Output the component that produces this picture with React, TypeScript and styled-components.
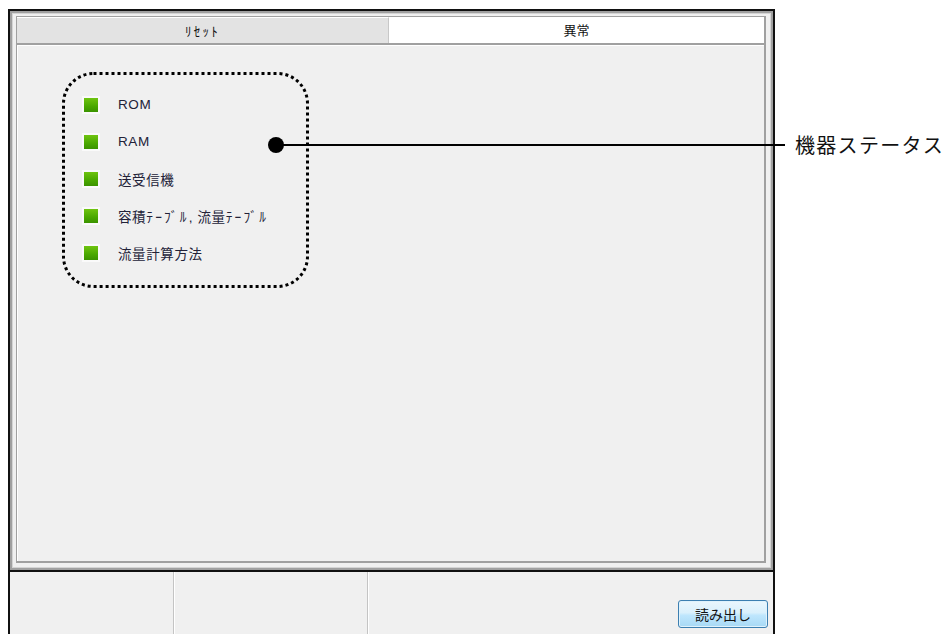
import styled, { createGlobalStyle } from "styled-components";
import { ReactNode } from "react";

const GlobalStyle = createGlobalStyle`
	html, body {
		margin: 0;
		padding: 0;
		background: #fff;
		overflow: hidden;
	}
	* {
		box-sizing: border-box;
	}
`;

const UI_FONT = `"Liberation Sans", "Noto Sans CJK JP", sans-serif`;

const Page = styled.div`
	position: relative;
	width: 948px;
	height: 634px;
	padding: 9px 0 0 8px;
	display: flex;
	align-items: flex-start;
	font-family: ${UI_FONT};
	overflow: hidden;
`;

const Window = styled.div`
	width: 767px;
	height: 640px;
	flex-shrink: 0;
	display: flex;
	flex-direction: column;
	background: #f0f0f0;
	border-left: 2px solid #111;
	border-top: 2px solid #111;
	border-right: 2px solid #111;
`;

const Frame = styled.div`
	height: 561px;
	padding: 5px 7px 7px 6px;
	display: flex;
	flex-direction: column;
	border-bottom: 2px solid #111;
	box-shadow: inset 0 0 0 2px #a0a0a0, inset 0 0 0 3px #d4d4d4;
`;

const TabRow = styled.div`
	height: 27px;
	display: flex;
	flex-shrink: 0;
	border-top: 1px solid #a0a0a0;
	border-left: 1px solid #a0a0a0;
	border-right: 2px solid #a0a0a0;
`;

const Tab = styled.div<{ active?: boolean }>`
	width: ${({ active }) => (active ? "auto" : "372px")};
	flex: ${({ active }) => (active ? 1 : "none")};
	display: flex;
	align-items: center;
	justify-content: center;
	padding-bottom: ${({ active }) => (active ? "3px" : "0")};
	font: 13px ${UI_FONT};
	color: #111;
	background: ${({ active }) => (active ? "#fff" : "#e3e3e3")};
	border-top: 1px solid #fff;
	border-right: ${({ active }) => (active ? "none" : "1px solid #c8c8c8")};
`;

// half-width katakana are drawn wider in the original UI font
const Kana = styled.span`
	letter-spacing: 2.2px;
`;

const Panel = styled.div`
	flex: 1;
	background: #f0f0f0;
	border-top: 2px solid #a0a0a0;
	border-left: 1px solid #a0a0a0;
	border-right: 2px solid #a0a0a0;
	border-bottom: 2px solid #a0a0a0;
	box-shadow: inset 1px 1px 0 #fff;
	padding: 41px 0 0 65px;
`;

const StatusList = styled.ul`
	list-style: none;
	margin: 0;
	padding: 0;
	display: flex;
	flex-direction: column;
`;

const StatusRow = styled.li`
	height: 37px;
	display: flex;
	align-items: center;
	gap: 18px;
`;

const Indicator = styled.span`
	width: 18px;
	height: 18px;
	border: 2px solid #fafafa;
	background: linear-gradient(180deg, #6fc410 0%, #4aa800 60%, #3b9300 100%);
	flex-shrink: 0;
`;

const StatusLabel = styled.span`
	font: 13.5px ${UI_FONT};
	letter-spacing: 0.6px;
	color: #222238;
`;

const StatusBar = styled.div`
	flex: 1;
	display: flex;
`;

const StatusCell = styled.div<{ w?: number }>`
	width: ${({ w }) => (w ? `${w}px` : "auto")};
	flex: ${({ w }) => (w ? "none" : 1)};
	display: flex;
	align-items: flex-start;
	justify-content: flex-end;
	padding: 28px 5px 0 0;
	border-right: ${({ w }) => (w ? "1px solid #c4c4c4" : "none")};
	box-shadow: ${({ w }) => (w ? "1px 0 0 #fff" : "none")};
`;

const ReadButton = styled.button`
	width: 90px;
	height: 28px;
	font: 14px ${UI_FONT};
	color: #111;
	border: 1px solid #3c7fb1;
	border-radius: 3px;
	background: linear-gradient(180deg, #eaf6fd 0%, #d9f0fc 45%, #bee6fd 55%, #a7d9f5 100%);
	box-shadow: inset 0 0 0 1px #dff2fc;
	padding: 0;
`;

const Callout = styled.div`
	margin: 124px 0 0 20px;
	font: 20px "Noto Sans CJK JP", sans-serif;
	line-height: 24px;
	letter-spacing: 1.3px;
	color: #111;
	white-space: nowrap;
`;

const Overlay = styled.svg`
	position: absolute;
	left: 0;
	top: 0;
	pointer-events: none;
`;

const statuses: { id: string; label: ReactNode }[] = [
	{ id: "rom", label: "ROM" },
	{ id: "ram", label: "RAM" },
	{ id: "radio", label: "送受信機" },
	{
		id: "tables",
		label: (
			<>
				容積<Kana>ﾃｰﾌﾞﾙ</Kana>, 流量<Kana>ﾃｰﾌﾞﾙ</Kana>
			</>
		)
	},
	{ id: "calc", label: "流量計算方法" }
];

const App = () => (
	<>
		<GlobalStyle />
		<Page>
			<Window>
				<Frame>
					<TabRow>
						<Tab>
							<Kana>ﾘｾｯﾄ</Kana>
						</Tab>
						<Tab active>異常</Tab>
					</TabRow>
					<Panel>
						<StatusList>
							{statuses.map(s => (
								<StatusRow key={s.id}>
									<Indicator />
									<StatusLabel>{s.label}</StatusLabel>
								</StatusRow>
							))}
						</StatusList>
					</Panel>
				</Frame>
				<StatusBar>
					<StatusCell w={164} />
					<StatusCell w={194} />
					<StatusCell>
						<ReadButton type="button">読み出し</ReadButton>
					</StatusCell>
				</StatusBar>
			</Window>
			<Callout>機器ステータス</Callout>
			<Overlay width="948" height="634" viewBox="0 0 948 634">
				<rect
					x="63.5"
					y="73.5"
					width="244"
					height="213"
					rx="30"
					fill="none"
					stroke="#000"
					strokeWidth="3"
					strokeDasharray="3 3"
				/>
				<line x1="276" y1="145" x2="785" y2="145" stroke="#000" strokeWidth="2" />
				<circle cx="276" cy="145" r="8" fill="#000" />
			</Overlay>
		</Page>
	</>
);

export default App;
